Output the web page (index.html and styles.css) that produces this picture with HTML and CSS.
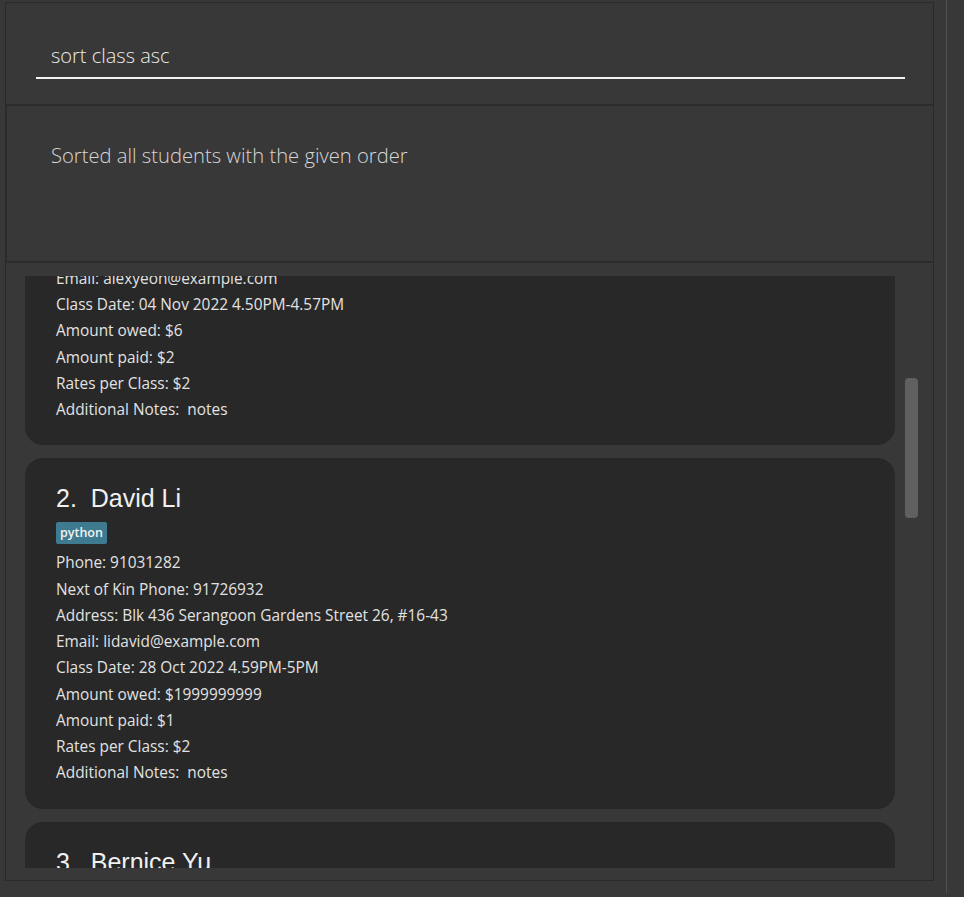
FILE: index.html
```html
<!DOCTYPE html>
<html lang="en">
<head>
<meta charset="utf-8">
<title>Students</title>
<link rel="stylesheet" href="styles.css">
</head>
<body>
<div class="app">
  <div class="main">
    <div class="command">
      <div class="command-field">sort class asc</div>
    </div>
    <div class="result">Sorted all students with the given order</div>
    <div class="list-panel">
      <div class="viewport">
        <div class="list">
          <div class="card">
            <div class="name">1.&nbsp; Alex Yeoh</div>
            <div class="tags"><span class="tag">friends</span></div>
            <div class="detail">Phone: 87438807</div>
            <div class="detail">Next of Kin Phone: 91234567</div>
            <div class="detail">Address: Blk 30 Geylang Street 29, #06-40</div>
            <div class="detail">Email: alexyeoh@example.com</div>
            <div class="detail">Class Date: 04 Nov 2022 4.50PM-4.57PM</div>
            <div class="detail">Amount owed: $6</div>
            <div class="detail">Amount paid: $2</div>
            <div class="detail">Rates per Class: $2</div>
            <div class="detail">Additional Notes:&nbsp; notes</div>
          </div>
          <div class="card">
            <div class="name">2.&nbsp; David Li</div>
            <div class="tags"><span class="tag">python</span></div>
            <div class="detail">Phone: 91031282</div>
            <div class="detail">Next of Kin Phone: 91726932</div>
            <div class="detail">Address: Blk 436 Serangoon Gardens Street 26, #16-43</div>
            <div class="detail">Email: lidavid@example.com</div>
            <div class="detail">Class Date: 28 Oct 2022 4.59PM-5PM</div>
            <div class="detail">Amount owed: $1999999999</div>
            <div class="detail">Amount paid: $1</div>
            <div class="detail">Rates per Class: $2</div>
            <div class="detail">Additional Notes:&nbsp; notes</div>
          </div>
          <div class="card">
            <div class="name">3.&nbsp; Bernice Yu</div>
            <div class="tags"><span class="tag">java</span></div>
            <div class="detail">Phone: 99272758</div>
            <div class="detail">Next of Kin Phone: 93210283</div>
          </div>
        </div>
      </div>
      <div class="scroll-track"><div class="scroll-thumb"></div></div>
    </div>
  </div>
  <div class="divider"></div>
</div>
</body>
</html>
```
FILE: styles.css
```css
html, body {
  margin: 0;
  padding: 0;
  background: #383838;
  height: 100%;
  overflow: hidden;
}

.app {
  display: flex;
  align-items: flex-start;
  height: 897px;
}

.main {
  margin: 2px 0 0 5px;
  width: 927px;
  height: 877px;
  border: 1px solid #2a2a2a;
  display: flex;
  flex-direction: column;
}

.divider {
  margin-left: 12px;
  width: 1px;
  height: 893px;
  background: #515151;
}

.command {
  height: 101px;
  padding: 0 28px 0 30px;
  box-sizing: border-box;
  display: flex;
  flex-direction: column;
  justify-content: flex-start;
}

.command-field {
  margin-top: 36px;
  height: 38px;
  padding-left: 15px;
  border-bottom: 2px solid #f2f2f2;
  box-sizing: content-box;
  font-family: "Open Sans", "Noto Sans", sans-serif;
  font-weight: 300;
  font-size: 20px;
  line-height: 34px;
  color: #ececec;
}

.result {
  border-top: 2px solid #2c2c2c;
  border-bottom: 2px solid #2c2c2c;
  border-left: 1px solid #2c2c2c;
  padding: 35px 0 0 44px;
  box-sizing: content-box;
  height: 120px;
  font-family: "Open Sans", "Noto Sans", sans-serif;
  font-weight: 300;
  font-size: 20.2px;
  line-height: 28px;
  color: #d6d6d6;
}

.list-panel {
  flex: 1;
  min-height: 0;
  display: flex;
  padding: 13px 14px 12px 19px;
}

.viewport {
  width: 870px;
  overflow: hidden;
}

.list {
  margin-top: -181px;
  display: flex;
  flex-direction: column;
  gap: 13px;
}

.card {
  background: #282828;
  border-radius: 18px;
  padding: 25px 31px 22px 31px;
}

.name {
  font-family: "Liberation Sans", Arial, sans-serif;
  font-size: 25px;
  line-height: 30px;
  color: #f0f0f0;
}

.tags {
  margin-top: 9px;
  margin-bottom: 6px;
  display: flex;
  gap: 6px;
}

.tag {
  display: inline-block;
  height: 22px;
  line-height: 22px;
  padding: 0 4px;
  background: #3e7b91;
  border-radius: 2px;
  font-family: "Open Sans", "Noto Sans", sans-serif;
  font-weight: 600;
  font-size: 12.5px;
  color: #f2f2f2;
}

.detail {
  font-family: "Open Sans", "Noto Sans", sans-serif;
  font-size: 15.4px;
  line-height: 26.25px;
  color: #e2e2e2;
  white-space: nowrap;
}

.scroll-track {
  margin-left: 10px;
  width: 13px;
  padding-top: 102px;
}

.scroll-thumb {
  height: 140px;
  background: #606060;
  border-radius: 4px;
}
```
